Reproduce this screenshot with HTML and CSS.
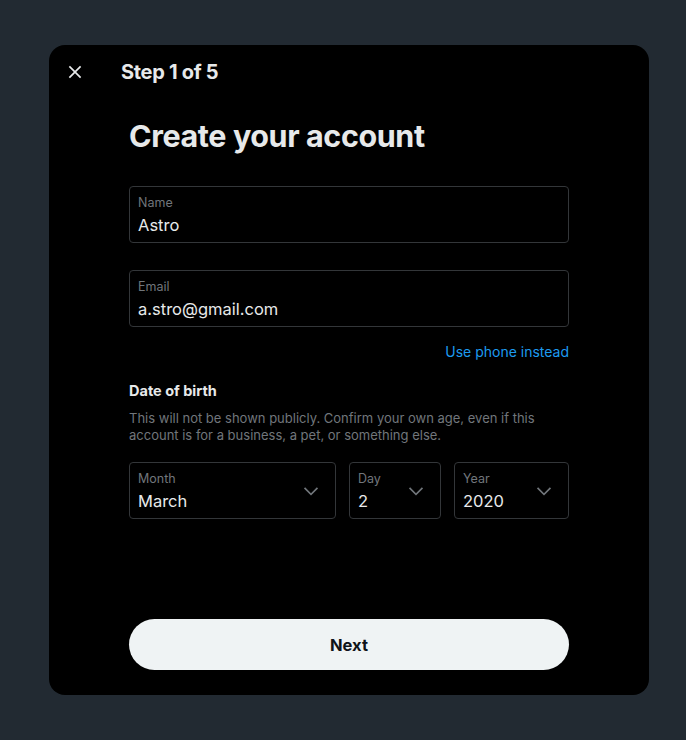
FILE: index.html
```html
<!DOCTYPE html>
<html lang="en">
<head>
    <meta charset="UTF-8">
    <meta name="viewport" content="width=device-width, initial-scale=1.0">
    <title>Create your account</title>
    <link rel="stylesheet" href="styles.css">
</head>
<body>
    <div class="modal">
        <div class="modal-header">
            <button class="close-btn" aria-label="Close">
                <svg viewBox="0 0 24 24" width="20" height="20"><path d="M10.59 12L4.54 5.96l1.42-1.42L12 10.590l6.04-6.05 1.42 1.42L13.41 12l6.05 6.04-1.42 1.42L12 13.41l-6.04 6.05-1.42-1.42L10.59 12z" fill="currentColor"/></svg>
            </button>
            <span class="step">Step 1 of 5</span>
        </div>

        <div class="modal-body">
            <h1>Create your account</h1>

            <div class="field">
                <span class="field-label">Name</span>
                <span class="field-value">Astro</span>
            </div>

            <div class="field">
                <span class="field-label">Email</span>
                <span class="field-value">a.stro@gmail.com</span>
            </div>

            <div class="switch-link">Use phone instead</div>

            <div class="dob-title">Date of birth</div>
            <p class="dob-text">This will not be shown publicly. Confirm your own age, even if this account is for a business, a pet, or something else.</p>

            <div class="dob-row">
                <div class="field select month">
                    <span class="field-label">Month</span>
                    <span class="field-value">March</span>
                    <svg class="chevron" viewBox="0 0 24 24"><path d="M3.543 8.96l1.414-1.42L12 14.59l7.043-7.05 1.414 1.42L12 17.41 3.543 8.96z" fill="currentColor"/></svg>
                </div>
                <div class="field select day">
                    <span class="field-label">Day</span>
                    <span class="field-value">2</span>
                    <svg class="chevron" viewBox="0 0 24 24"><path d="M3.543 8.96l1.414-1.42L12 14.59l7.043-7.05 1.414 1.42L12 17.41 3.543 8.96z" fill="currentColor"/></svg>
                </div>
                <div class="field select year">
                    <span class="field-label">Year</span>
                    <span class="field-value">2020</span>
                    <svg class="chevron" viewBox="0 0 24 24"><path d="M3.543 8.96l1.414-1.42L12 14.59l7.043-7.05 1.414 1.42L12 17.41 3.543 8.96z" fill="currentColor"/></svg>
                </div>
            </div>
        </div>

        <div class="modal-footer">
            <button class="next-btn">Next</button>
        </div>
    </div>
</body>
</html>
```

FILE: styles.css
```css
body {
    margin: 0;
    background-color: #222a32;
    font-family: Inter, "Liberation Sans", Arial, sans-serif;
    color: #e7e9ea;
}

.modal {
    width: 600px;
    height: 650px;
    margin: 45px 0 0 49px;
    background-color: #000;
    border-radius: 16px;
    display: flex;
    flex-direction: column;
}

.modal-header {
    height: 53px;
    display: flex;
    align-items: center;
    padding: 0 8px;
}

.close-btn {
    width: 36px;
    height: 36px;
    margin-right: 28px;
    background: none;
    border: none;
    color: #e7e9ea;
    display: flex;
    align-items: center;
    justify-content: center;
    padding: 0;
}

.step {
    font-size: 20px;
    font-weight: 700;
    letter-spacing: -0.3px;
}

.modal-body {
    padding: 0 80px;
    flex: 1;
}

h1 {
    font-size: 30.5px;
    font-weight: 700;
    letter-spacing: -0.4px;
    margin: 20px 0 32px;
    line-height: 36px;
}

.field {
    height: 57px;
    border: 1px solid #333639;
    border-radius: 4px;
    box-sizing: border-box;
    padding: 8px 8px 0;
    margin-bottom: 27px;
    display: flex;
    flex-direction: column;
    position: relative;
}

.field-label {
    font-size: 12.5px;
    color: #71767b;
    line-height: 16px;
}

.field-value {
    font-size: 16.5px;
    line-height: 24px;
    margin-top: 2px;
}

.switch-link {
    text-align: right;
    color: #1d9bf0;
    font-size: 14px;
    margin-top: -12px;
    line-height: 20px;
}

.dob-title {
    font-size: 14.5px;
    font-weight: 700;
    margin-top: 19px;
    line-height: 20px;
}

.dob-text {
    font-size: 13px;
    color: #71767b;
    line-height: 17px;
    margin: 9px 0 18px;
}

.dob-row {
    display: flex;
    gap: 13px;
}

.dob-row .field {
    margin-bottom: 0;
}

.month { width: 207px; }
.day { width: 92px; }
.year { width: 115px; }

.chevron {
    position: absolute;
    right: 14px;
    top: 18px;
    width: 20px;
    height: 20px;
    color: #71767b;
}

.modal-footer {
    padding: 0 80px 25px;
}

.next-btn {
    width: 100%;
    height: 51px;
    border-radius: 26px;
    border: none;
    background-color: #eff3f4;
    color: #0f1419;
    font-family: inherit;
    font-size: 16.5px;
    font-weight: 700;
}
```
